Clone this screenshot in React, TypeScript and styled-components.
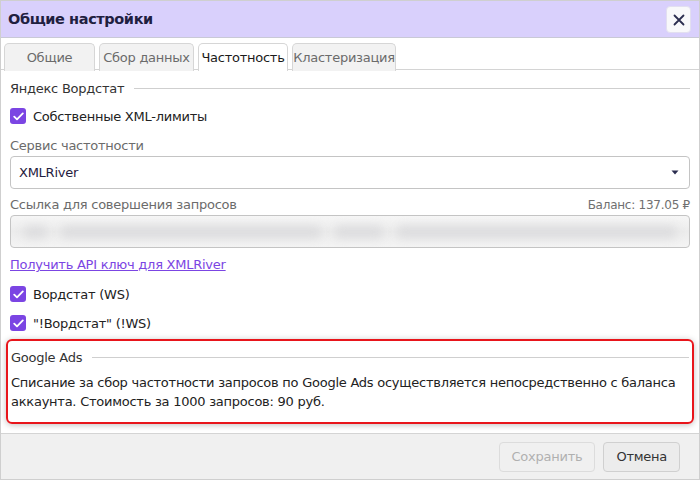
import { FC } from "react"
import styled, { createGlobalStyle } from "styled-components"

const GlobalStyle = createGlobalStyle`
  html, body {
    margin: 0;
    padding: 0;
    background: #ffffff;
  }
  body {
    font-family: "DejaVu Sans", Verdana, sans-serif;
    font-size: 13px;
    letter-spacing: -0.25px;
    color: #222;
  }
`

const tabs = ["Общие", "Сбор данных", "Частотность", "Кластеризация"]
const tabWidths = [91, 95, 90, 104]

const Check: FC = () => (
  <CheckBox>
    <svg width="11" height="9" viewBox="0 0 11 9">
      <path d="M1.2 4.6 L4 7.4 L9.8 1.4" stroke="#fff" strokeWidth="1.8" fill="none" strokeLinecap="round" strokeLinejoin="round" />
    </svg>
  </CheckBox>
)

export default function App() {
  return (
    <>
      <GlobalStyle />
      <Dialog>
        <Header>
          <Title>Общие настройки</Title>
          <CloseButton>
            <svg width="12" height="12" viewBox="0 0 12 12">
              <path d="M1.5 1.5 L10.5 10.5 M10.5 1.5 L1.5 10.5" stroke="#2b2d4f" strokeWidth="1.8" strokeLinecap="round" />
            </svg>
          </CloseButton>
        </Header>
        <TabBar>
          {tabs.map((t, i) => (
            <Tab key={t} $active={i === 2} $width={tabWidths[i]}>
              {t}
            </Tab>
          ))}
        </TabBar>
        <Body>
          <Section>
            <SectionTitle>Яндекс Вордстат</SectionTitle>
            <SectionLine />
          </Section>
          <CheckRow $top={12}>
            <Check />
            <span>Собственные XML-лимиты</span>
          </CheckRow>
          <FieldLabel $top={14}>
            <span>Сервис частотности</span>
          </FieldLabel>
          <Select>
            <span>XMLRiver</span>
            <svg width="8" height="5" viewBox="0 0 8 5">
              <path d="M0.5 0.5 L7.5 0.5 L4 4.5 Z" fill="#2b2d4f" />
            </svg>
          </Select>
          <FieldLabel $top={8}>
            <span>Ссылка для совершения запросов</span>
            <Balance>Баланс: 137.05 ₽</Balance>
          </FieldLabel>
          <BlurredInput>
            <Blur $width={26} />
            <Blur $width={270} />
            <Blur $width={52} />
            <Blur $width={290} />
          </BlurredInput>
          <Link>Получить API ключ для XMLRiver</Link>
          <CheckRow $top={14}>
            <Check />
            <span>Вордстат (WS)</span>
          </CheckRow>
          <CheckRow $top={13}>
            <Check />
            <span>"!Вордстат" (!WS)</span>
          </CheckRow>
          <Highlight>
            <Section>
              <SectionTitle>Google Ads</SectionTitle>
              <SectionLine />
            </Section>
            <Note>
              Списание за сбор частотности запросов по Google Ads осуществляется непосредственно с баланса аккаунта.
              Стоимость за 1000 запросов: 90 руб.
            </Note>
          </Highlight>
        </Body>
        <Footer>
          <Button disabled>Сохранить</Button>
          <Button>Отмена</Button>
        </Footer>
      </Dialog>
    </>
  )
}

const Dialog = styled.div`
  width: 700px;
  height: 480px;
  box-sizing: border-box;
  border: 1px solid #cfcfcf;
  display: flex;
  flex-direction: column;
  background: #fff;
`

const Header = styled.div`
  height: 36px;
  flex-shrink: 0;
  background: #d9d0fc;
  border-bottom: 1px solid #c9c9d6;
  display: flex;
  align-items: center;
  justify-content: space-between;
  padding: 0 8px 0 7px;
`

const Title = styled.div`
  font-size: 14.5px;
  letter-spacing: -0.4px;
  font-weight: bold;
  color: #1f2040;
`

const CloseButton = styled.button`
  width: 25px;
  height: 27px;
  margin-top: 1px;
  border: 1px solid #e2dff0;
  border-radius: 4px;
  background: #f8f8fa;
  display: flex;
  align-items: center;
  justify-content: center;
  padding: 0;
`

const TabBar = styled.div`
  display: flex;
  gap: 4px;
  padding: 5px 0 0 3px;
  border-bottom: 1px solid #d4d4d4;
  height: 32px;
  box-sizing: border-box;
  flex-shrink: 0;
`

const Tab = styled.div<{ $active: boolean; $width: number }>`
  width: ${({ $width }) => $width}px;
  box-sizing: border-box;
  height: 28px;
  border: 1px solid #d6d6d6;
  border-bottom: none;
  border-radius: 5px 5px 0 0;
  background: ${({ $active }) => ($active ? "#fff" : "#f2f2f2")};
  color: ${({ $active }) => ($active ? "#1a1a1a" : "#6b6b6b")};
  display: flex;
  align-items: center;
  justify-content: center;
  font-size: 13px;
  margin-bottom: -1px;
  ${({ $active }) => $active && "position: relative; z-index: 1;"}
`

const Body = styled.div`
  flex: 1;
  padding: 11px 9px 0 9px;
  display: flex;
  flex-direction: column;
`

const Section = styled.div`
  display: flex;
  align-items: center;
  gap: 10px;
`

const SectionTitle = styled.div`
  color: #333;
  white-space: nowrap;
`

const SectionLine = styled.div`
  flex: 1;
  height: 1px;
  background: #cfcfcf;
`

const CheckRow = styled.div<{ $top: number }>`
  display: flex;
  align-items: center;
  gap: 7px;
  margin-top: ${({ $top }) => $top}px;
  color: #222;
`

const CheckBox = styled.span`
  width: 16px;
  height: 16px;
  border-radius: 3px;
  background: #7b45e3;
  display: flex;
  align-items: center;
  justify-content: center;
  flex-shrink: 0;
`

const FieldLabel = styled.div<{ $top: number }>`
  display: flex;
  justify-content: space-between;
  align-items: center;
  color: #6b6b6b;
  margin-top: ${({ $top }) => $top}px;
  margin-bottom: 3px;
`

const Balance = styled.span`
  color: #707070;
  font-size: 12px;
`

const Select = styled.div`
  height: 33px;
  box-sizing: border-box;
  border: 1px solid #c4c4c4;
  border-radius: 4px;
  display: flex;
  align-items: center;
  justify-content: space-between;
  padding: 0 10px 0 8px;
  color: #1f2040;
`

const BlurredInput = styled.div`
  height: 33px;
  box-sizing: border-box;
  border: 1px solid #c4c4c4;
  border-radius: 4px;
  background: linear-gradient(to bottom, #f6f6f6, #ececec 50%, #f4f4f4);
  display: flex;
  align-items: center;
  gap: 12px;
  padding: 0 12px;
  overflow: hidden;
`

const Blur = styled.span<{ $width: number }>`
  width: ${({ $width }) => $width}px;
  height: 12px;
  background: #dcdcde;
  border-radius: 6px;
  filter: blur(5px);
`

const Link = styled.a`
  color: #7b45e3;
  text-decoration: underline;
  margin-top: 9px;
  cursor: pointer;
`

const Highlight = styled.div`
  margin: 8px -4px 0 -4px;
  border: 2px solid #e8151b;
  border-radius: 6px;
  box-shadow: 0 1px 6px rgba(0, 0, 0, 0.25);
  padding: 9px 3px 11px 3px;
  display: flex;
  flex-direction: column;
  gap: 8px;
`

const Note = styled.div`
  line-height: 19px;
  color: #222;
`

const Footer = styled.div`
  height: 45px;
  flex-shrink: 0;
  background: #f0f0f0;
  border-top: 1px solid #d4d4d4;
  display: flex;
  align-items: center;
  justify-content: flex-end;
  gap: 8px;
  padding: 0 19px 0 0;
`

const Button = styled.button`
  height: 30px;
  padding: 0 12px;
  border: 1px solid #d0d0d0;
  border-radius: 4px;
  background: #ececec;
  color: #333;
  font-family: inherit;
  font-size: 13px;
  letter-spacing: -0.25px;
  &:disabled {
    background: #f0f0f0;
    color: #b0b0b0;
    border-color: #dcdcdc;
  }
`
